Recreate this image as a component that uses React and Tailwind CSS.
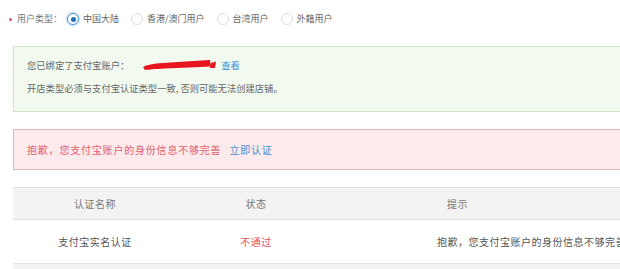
import React from 'react';

function Radio({ checked, label }) {
    return (
        <label className="flex items-center">
            {checked ? (
                <span className="w-[12px] h-[12px] rounded-full border border-[#3f8fd8] flex items-center justify-center shadow-[0_0_2px_1px_rgba(63,143,216,0.35)]">
                    <span className="w-[5px] h-[5px] rounded-full bg-[#1f6fb8]" />
                </span>
            ) : (
                <span className="w-[12px] h-[12px] rounded-full border border-[#dedede] bg-white" />
            )}
            <span className="ml-[4px] text-[#666]">{label}</span>
        </label>
    );
}

function Scribble() {
    return (
        <svg width="74" height="12" viewBox="0 0 74 12">
            <path
                d="M0 8 C 4 6, 10 4.5, 20 4 C 34 3, 50 2, 67 1 L 68 7.5 C 54 8, 38 9, 22 9.5 C 12 10, 6 10.5, 2 11 Z"
                fill="#e8141e"
            />
            <path d="M68 4 L73 2.5 L72 9 L67 9 Z" fill="#e8141e" />
        </svg>
    );
}

export default function App() {
    return (
        <div
            className="w-[620px] h-[269px] overflow-hidden bg-white text-[9px] text-[#666]"
            style={{ fontFamily: '"Noto Sans CJK SC", "Noto Sans", sans-serif' }}
        >
            <div className="w-[760px] pl-[13px]">
                {/* user type */}
                <div className="flex items-center h-[20px] mt-[9px] leading-[20px]">
                    <span className="w-[3px] h-[3px] rounded-full bg-[#e25b6a] -ml-[4px] mr-[5px]" />
                    <span className="text-[#777] mr-[5px]">用户类型：</span>
                    <div className="flex items-center gap-[12px]">
                        <Radio checked label="中国大陆" />
                        <Radio label="香港/澳门用户" />
                        <Radio label="台湾用户" />
                        <Radio label="外籍用户" />
                    </div>
                </div>

                {/* bound account */}
                <div className="mt-[17px] border border-[#d3e2c6] bg-[#f2f9ef] pl-[13px] pt-[7px] pb-[12px] leading-[22px] text-[9.3px] text-[#666]">
                    <div className="flex items-center">
                        <span>您已绑定了支付宝账户：</span>
                        <span className="ml-[14px] flex">
                            <Scribble />
                        </span>
                        <span className="ml-[4px] text-[#3d8fd6]">查看</span>
                    </div>
                    <div className="mt-[1px]">开店类型必须与支付宝认证类型一致, 否则可能无法创建店铺。</div>
                </div>

                {/* warning */}
                <div className="mt-[17px] h-[41px] border border-[#d9b6ba] bg-[#fdeaec] pl-[13px] flex items-center text-[10px] tracking-[0.8px]">
                    <span className="text-[#e0606f]">抱歉，您支付宝账户的身份信息不够完善</span>
                    <span className="ml-[8px] text-[#3d8fd6]">立即认证</span>
                </div>

                {/* table */}
                <div className="mt-[17px] text-[10px] tracking-[0.5px]">
                    <div className="grid grid-cols-[164px_158px_245px_1fr] h-[33px] bg-[#f3f3f3] border-y border-[#e2e2e2] items-center text-center text-[#777]">
                        <span>认证名称</span>
                        <span>状态</span>
                        <span>提示</span>
                        <span />
                    </div>
                    <div className="grid grid-cols-[164px_158px_245px_1fr] h-[43px] bg-white items-center text-center text-[#555] whitespace-nowrap">
                        <span>支付宝实名认证</span>
                        <span className="text-[#e0505f]">不通过</span>
                        <span className="text-left pl-[102px]">抱歉，您支付宝账户的身份信息不够完善</span>
                        <span />
                    </div>
                    <div className="h-[12px] bg-[#f3f3f3] border-t border-[#e2e2e2]" />
                </div>
            </div>
        </div>
    );
}
